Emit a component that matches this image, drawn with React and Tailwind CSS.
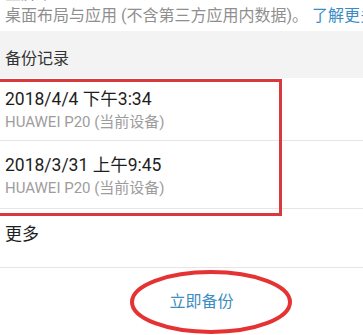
import React from 'react';

const FONT = { fontFamily: "Roboto, 'Noto Sans CJK SC', sans-serif" };

const RECORDS = [
  { time: '2018/4/4 下午3:34', device: 'HUAWEI P20 (当前设备)', h: 'h-[63px] pt-[9px]' },
  { time: '2018/3/31 上午9:45', device: 'HUAWEI P20 (当前设备)', h: 'h-[68px] pt-[12px]' },
];

export default function App() {
  return (
    <div className="w-[363px] h-[335px] overflow-hidden bg-white relative" style={FONT}>
      {/* cut-off line above */}
      <div className="h-[4px] overflow-hidden flex items-end px-[5px]">
        <span className="text-[16px] leading-[20px] text-[#8a8a8a] whitespace-nowrap">主屏幕：</span>
      </div>
      <div className="h-[27px] pt-[2px] px-[5px] whitespace-nowrap overflow-hidden text-[16px] leading-[20px] text-[#8f8f8f]">
        桌面布局与应用 (不含第三方应用内数据)。 <span className="text-[#3a8cc4]">了解更多</span>
      </div>

      {/* section header */}
      <div className="h-[47px] bg-[#f3f3f3] pt-[18px] px-[5px] text-[16px] leading-[20px] text-[#333]">
        备份记录
      </div>

      <div className="relative">
        {RECORDS.map((r) => (
          <div key={r.time} className={`${r.h} border-b border-[#e6e6e6] px-[5px]`}>
            <div className="text-[17.5px] leading-[24px] text-[#1e1e1e]">{r.time}</div>
            <div className="mt-[1px] text-[15px] leading-[20px] text-[#9d9d9d]">{r.device}</div>
          </div>
        ))}
        <div className="h-[59px] pt-[14px] border-b border-[#e6e6e6] px-[5px] text-[17px] leading-[22px] text-[#1e1e1e]">
          更多
        </div>

        {/* annotation box */}
        <div className="absolute left-[-3px] top-[1px] w-[285px] h-[137px] border-[3px] border-[#d8393f] pointer-events-none" />
      </div>

      <div className="h-[67px] flex items-center justify-center pl-[40px]">
        <span className="text-[16px] leading-[20px] text-[#3d8dc0]">立即备份</span>
      </div>

      {/* annotation ellipse */}
      <svg className="absolute left-0 top-0 pointer-events-none" width="363" height="335">
        <ellipse cx="211" cy="302" rx="79" ry="30" fill="none" stroke="#e53232" strokeWidth="4" />
      </svg>
    </div>
  );
}
